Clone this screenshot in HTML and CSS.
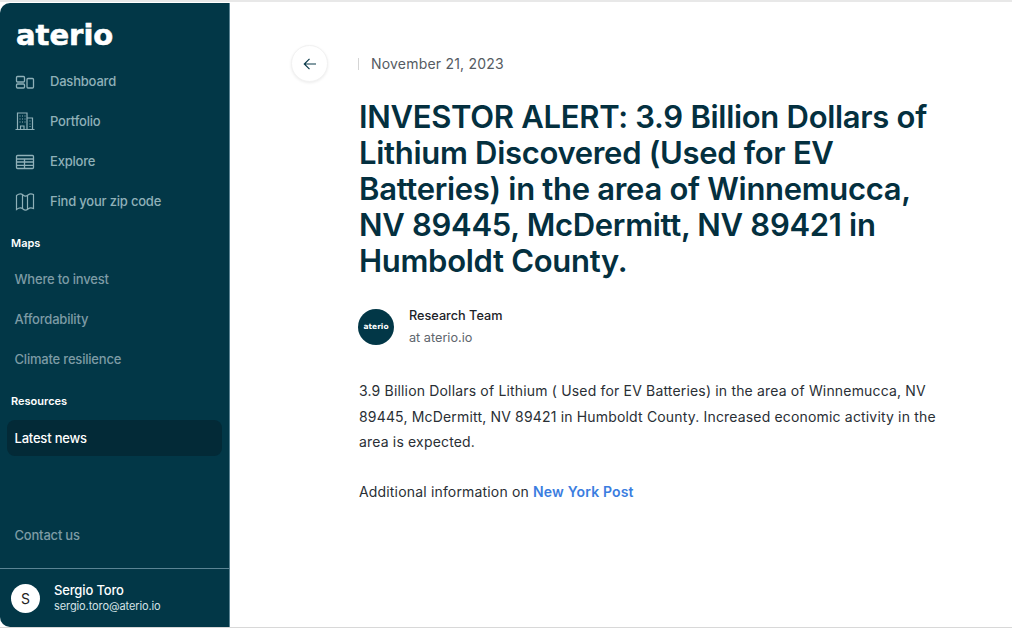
FILE: index.html
```html
<!DOCTYPE html>
<html lang="en">
<head>
    <meta charset="UTF-8">
    <meta name="viewport" content="width=device-width, initial-scale=1.0">
    <title>Aterio - Latest news</title>
    <link rel="stylesheet" href="styles.css">
</head>
<body>
    <div class="app">
        <aside class="sidebar">
            <div class="logo">aterio</div>
            <nav class="main-nav">
                <a class="nav-item">
                    <svg class="nav-icon" viewBox="0 0 20 20" fill="none" stroke="currentColor" stroke-width="1.3">
                        <rect x="1.500" y="5.500" width="8" height="5.500" rx="1"/>
                        <rect x="1.500" y="13" width="8" height="4" rx="1"/>
                        <rect x="12" y="7.500" width="6.500" height="9.500" rx="1"/>
                    </svg>
                    Dashboard
                </a>
                <a class="nav-item">
                    <svg class="nav-icon" viewBox="0 0 20 20" fill="none" stroke="currentColor" stroke-width="1.2">
                        <path d="M.5 18.500h19M2.500 18.500V2h9.500v16.500M12 7h5.500v11.500M5.500 18.500v-3.500h3.500v3.500"/>
                        <path d="M4.500 5h1M7 5h1M9.500 5h1M4.500 8h1M7 8h1M9.500 8h1M4.500 11h1M7 11h1M9.500 11h1M14.500 10h1M14.500 13h1M14.500 15.500h1"/>
                    </svg>
                    Portfolio
                </a>
                <a class="nav-item">
                    <svg class="nav-icon" viewBox="0 0 20 20" fill="none" stroke="currentColor" stroke-width="1.3">
                        <rect x="1.500" y="4.500" width="17" height="13" rx="1"/>
                        <path d="M1.500 8h17M1.500 11h17M1.500 14.300h17M9.500 8v9.500"/>
                    </svg>
                    Explore
                </a>
                <a class="nav-item">
                    <svg class="nav-icon" viewBox="0 0 20 20" fill="none" stroke="currentColor" stroke-width="1.2">
                        <path d="M1.500 4.500c2.500-1.800 5-1.800 6.500-.5 1.500 1.300 3.500 1.300 5 0 1.500-1.300 3.500-1.500 5.500-.5v14c-2-1-4-.8-5.500.5-1.500 1.300-3.500 1.300-5 0-1.500-1.300-4-1.300-6.500.5z"/>
                        <path d="M7.500 4v13.500M12.500 4.500V18"/>
                    </svg>
                    Find your zip code
                </a>
            </nav>
            <div class="nav-title maps">Maps</div>
            <nav>
                <a class="sub-item">Where to invest</a>
                <a class="sub-item">Affordability</a>
                <a class="sub-item">Climate resilience</a>
            </nav>
            <div class="nav-title resources">Resources</div>
            <a class="sub-item active">Latest news</a>
            <a class="sub-item contact">Contact us</a>
            <div class="user">
                <div class="avatar">S</div>
                <div>
                    <div class="user-name">Sergio Toro</div>
                    <div class="user-email">sergio.toro@aterio.io</div>
                </div>
            </div>
        </aside>
        <main class="content">
            <div class="back-btn">
                <svg viewBox="0 0 16 16" width="16" height="16" fill="none" stroke="#0b3a4a" stroke-width="1.2">
                    <path d="M14 8H2.500M7.500 2.800 2.300 8l5.200 5.200"/>
                </svg>
            </div>
            <article class="article">
                <div class="date">November 21, 2023</div>
                <h1>INVESTOR ALERT: 3.9 Billion Dollars of Lithium Discovered (Used for EV Batteries) in the area of Winnemucca, NV 89445, McDermitt, NV 89421 in Humboldt County.</h1>
                <div class="author">
                    <div class="author-logo">aterio</div>
                    <div>
                        <div class="author-name">Research Team</div>
                        <div class="author-org">at aterio.io</div>
                    </div>
                </div>
                <p>3.9 Billion Dollars of Lithium ( Used for EV Batteries) in the area of Winnemucca, NV 89445, McDermitt, NV 89421 in Humboldt County. Increased economic activity in the area is expected.</p>
                <p>Additional information on <a class="source" href="#">New York Post</a></p>
            </article>
        </main>
    </div>
</body>
</html>
```
FILE: styles.css
```css
* {
    box-sizing: border-box;
}
html, body {
    height: 100%;
}
body {
    margin: 0;
    font-family: Inter, Arial, sans-serif;
    background-color: #fff;
    overflow: hidden;
}
.app {
    display: flex;
    height: 628px;
    padding-top: 3px;
    padding-bottom: 1px;
    background: linear-gradient(#e8e8e8 0 2px, #fff 2px calc(100% - 1px), #d8d8d8 calc(100% - 1px));
}
.sidebar {
    width: 230px;
    flex-shrink: 0;
    display: flex;
    flex-direction: column;
    background-color: #023747;
    border-right: 1px solid #5b8494;
    border-radius: 10px 0 0 10px;
    color: #8fb0b8;
}
.logo {
    margin: 15px 0 0 16px;
    height: 35px;
    font-family: "DejaVu Sans", sans-serif;
    font-size: 29px;
    font-weight: 700;
    line-height: 35px;
    letter-spacing: 0;
    -webkit-text-stroke: 0.6px #fff;
    color: #fff;
}
.main-nav {
    margin-top: 8.600px;
    margin-bottom: 13px;
}
.nav-item {
    display: flex;
    align-items: center;
    gap: 15px;
    height: 39.700px;
    padding-left: 15px;
    font-size: 13px;
    font-weight: 500;
    letter-spacing: -0.2px;
}
.nav-icon {
    width: 20px;
    height: 20px;
    flex-shrink: 0;
}
.nav-title {
    height: 20px;
    line-height: 20px;
    padding-left: 11px;
    font-size: 11px;
    font-weight: 600;
    color: #fff;
}
.maps {
    margin-bottom: 6px;
}
.resources {
    margin-top: 13px;
}
.sub-item {
    display: flex;
    align-items: center;
    height: 39.700px;
    padding-left: 14.500px;
    font-size: 13px;
    font-weight: 500;
    letter-spacing: -0.2px;
    color: #7d9ba5;
}
.active {
    height: 36px;
    margin: 9px 7px 0;
    padding-left: 7.500px;
    background-color: #032a37;
    border-radius: 8px;
    color: #fff;
}
.contact {
    margin-top: auto;
    margin-bottom: 13px;
}
.user {
    display: flex;
    align-items: center;
    gap: 14px;
    height: 59px;
    padding-left: 11px;
    border-top: 1px solid #5b8494;
    color: #fff;
}
.avatar {
    width: 29px;
    height: 29px;
    border-radius: 50%;
    background-color: #fff;
    color: #222;
    font-size: 14px;
    line-height: 29px;
    text-align: center;
}
.user-name {
    margin-top: -1px;
    font-size: 13px;
    font-weight: 500;
    line-height: 17px;
    letter-spacing: -0.15px;
}
.user-email {
    font-size: 11px;
    line-height: 15px;
    letter-spacing: -0.1px;
    color: #d5e2e6;
}
.content {
    flex: 1;
    display: flex;
    align-items: flex-start;
    padding: 42px 0 0 61px;
}
.back-btn {
    width: 37px;
    height: 37px;
    display: flex;
    align-items: center;
    justify-content: center;
    flex-shrink: 0;
    border-radius: 50%;
    background-color: #fff;
    border: 1px solid #f2f2f2;
    box-shadow: 0 1px 3px rgba(0, 0, 0, 0.08);
}
.article {
    width: 590px;
    margin-left: 31px;
}
.date {
    height: 12px;
    margin: 13px 0 0 -1px;
    padding-left: 12px;
    border-left: 1px solid #d5d5d5;
    font-size: 14px;
    line-height: 12px;
    letter-spacing: 0.2px;
    color: #555b62;
}
h1 {
    margin: 29px 0 0;
    font-family: Inter, Arial, sans-serif;
    font-size: 31px;
    font-weight: 600;
    line-height: 36px;
    letter-spacing: -0.3px;
    color: #04303f;
}
.author {
    display: flex;
    align-items: center;
    gap: 15px;
    margin: 26px 0 0 -1px;
}
.author-logo {
    width: 36px;
    height: 36px;
    border-radius: 50%;
    background-color: #023747;
    color: #fff;
    font-family: "DejaVu Sans", sans-serif;
    font-size: 7.500px;
    font-weight: 700;
    line-height: 36px;
    text-align: center;
}
.author-name {
    font-size: 12.700px;
    font-weight: 500;
    line-height: 22px;
    color: #1c2228;
}
.author-org {
    font-size: 12.700px;
    line-height: 22px;
    color: #60666d;
}
p {
    margin: 0 0 24px;
    font-size: 14px;
    line-height: 25.500px;
    letter-spacing: 0.17px;
    color: #2a2f35;
}
.author + p {
    margin-top: 29px;
}
.source {
    color: #3b7de0;
    font-weight: 600;
    text-decoration: none;
}
```
